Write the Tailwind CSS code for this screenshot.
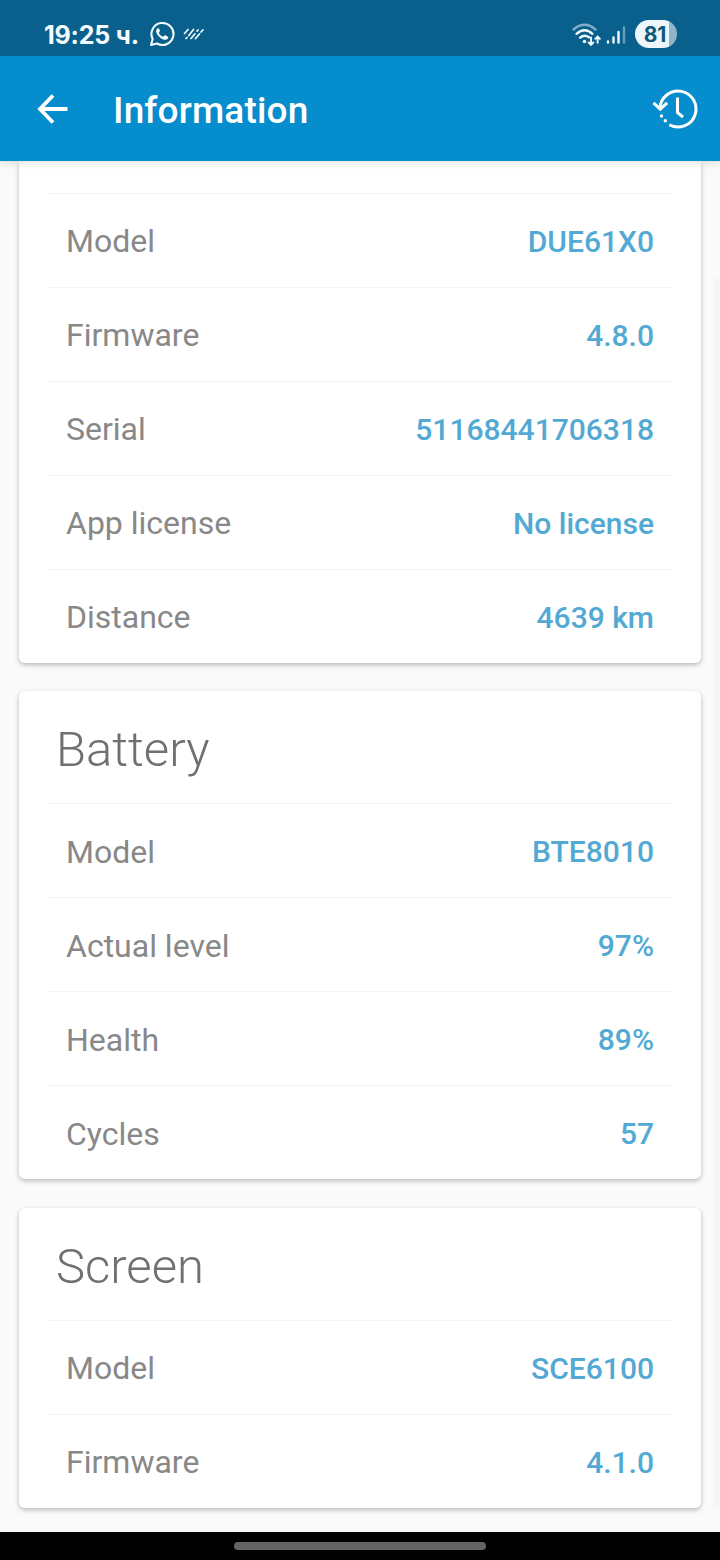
<!DOCTYPE html>
<html lang="en">
<head>
<meta charset="utf-8">
<title>Information</title>
<script src="https://cdn.jsdelivr.net/npm/@tailwindcss/browser@4"></script>
</head>
<body class="w-[720px] h-[1560px] overflow-hidden bg-[#fafafa] font-['Roboto',sans-serif]">
<div class="relative flex h-[1560px] w-[720px] flex-col">
  <header class="relative z-10 shrink-0 shadow-[0_2px_8px_rgba(0,0,0,0.12)]">
    <div class="flex h-14 items-center bg-[#0a608c] pt-3 pl-[44px] pr-[43px] text-[#f4fcff]">
      <span class="w-[96px] whitespace-nowrap pt-0.5 font-['Inter',sans-serif] text-[25px] leading-none font-bold tracking-[-0.2px]">19:25 ч.</span>
      <svg class="ml-[9px] h-[26px] w-[26px] shrink-0" viewBox="0 0 26 26" fill="none">
        <path d="M2 24 L3.7 18 A11 11 0 1 1 8 22.5 Z" stroke="currentColor" stroke-width="2.1" stroke-linejoin="round"/>
        <path d="M9.3 7.3c-.8-.2-2.3 1.200-2.200 3 .1 1.700 1.500 4 3.600 5.900 2.200 1.900 4.600 2.800 6 2.600 1.500-.2 2.700-1.500 2.600-2.500-.1-.6-2.800-2-3.500-2-.6 0-1.100 1.500-1.800 1.500-1.100-.1-4.100-2.900-4.200-4 0-.7 1.100-1.200 1.100-1.900 0-.6-.9-2.500-1.600-2.600Z" fill="currentColor"/>
      </svg>
      <svg class="ml-[8px] h-[14px] w-[22px] shrink-0" viewBox="0 0 22 14" fill="none" stroke="currentColor" stroke-width="1.7" stroke-linecap="round">
        <path d="M1.500 6.500 L5 2.500 M3 11.500 L4 10.500 M5.800 8.500 L10.500 2.500 M8 11.500 L12 6.800 M14 4.200 L15 3 M12.500 11.500 L16.500 7 M18 5 L20 2.800"/>
      </svg>
      <div class="flex-1"></div>
      <svg class="mt-0.5 mr-[2px] h-[24px] w-[30px] shrink-0" viewBox="0 0 30 24" fill="none" stroke="currentColor" stroke-width="2.400" stroke-linecap="round">
        <path d="M2.500 6.500 Q13.500 -3 24.500 6.500" opacity=".5"/>
        <path d="M5.500 10.800 Q13.500 3.600 21.500 10.800 M9 14.600 Q13.500 11.200 18 14.200"/>
        <circle cx="13.500" cy="18.500" r="1.700" fill="currentColor" stroke="none"/>
        <path d="M20 14.500 V21.500 M17.700 19.500 L20 21.800 L22.300 19.500 M26.600 19.700 V13.800 M24.300 15.800 L26.600 13.500 L28.900 15.800" stroke-width="1.900"/>
      </svg>
      <svg class="mt-0.5 ml-[3px] h-5 w-5 shrink-0" viewBox="0 0 20 20" fill="none" stroke="currentColor" stroke-width="2.400" stroke-linecap="round">
        <path d="M2 16.500 V17.500 M7.500 12.500 V17.500 M12.500 7 V17.500"/><path d="M18 2.500 V17.500" opacity=".4"/>
      </svg>
      <div class="ml-[9px] flex h-7 w-[42px] shrink-0 overflow-hidden rounded-full bg-[linear-gradient(to_right,#edf6fa_34px,#8fb5c9_34px)] text-[#0f5878]">
        <span class="w-full pr-0.5 text-center font-['Inter',sans-serif] text-[21px] leading-[29px] font-bold">81</span>
      </div>
    </div>
    <div class="flex h-[105px] items-center bg-[#058dcd] pl-[37px] pr-[22px] text-white">
      <svg class="h-8 w-8 shrink-0" viewBox="0 0 32 32" fill="none" stroke="currentColor" stroke-width="3.800">
        <path d="M30.500 16 H4 M16 2.500 L3 16 L16 29.500"/>
      </svg>
      <h1 class="ml-11 pt-1 text-[37px] leading-none font-medium tracking-[0.15px]">Information</h1>
      <svg class="ml-auto h-11 w-[46px] shrink-0" viewBox="0 0 46 44" fill="none" stroke="currentColor" stroke-width="3">
        <path d="M8 21.500 A18 18 0 1 1 17.300 37.800"/>
        <path d="M1.500 15.800 L8.300 22.200 L15.200 15.800"/>
        <path d="M25.500 10.500 V25.500 L31 30.200"/>
        <circle cx="9.500" cy="29" r="1.700" fill="currentColor" stroke="none"/><circle cx="13.300" cy="33.700" r="1.700" fill="currentColor" stroke="none"/>
      </svg>
    </div>
  </header>
  <main class="flex flex-1 flex-col px-[19px] text-[32px] text-[#888888]">
    <section class="rounded-b-md bg-white px-7 pt-8 shadow-[0_2px_5px_rgba(0,0,0,0.26)]">
      <div class="flex h-[94px] items-center justify-between border-t border-[#f3f3f3] px-[19px]"><span>Model</span><span class="pt-px text-[30px] font-medium text-[#52a9d3]">DUE61X0</span></div>
      <div class="flex h-[94px] items-center justify-between border-t border-[#f3f3f3] px-[19px]"><span>Firmware</span><span class="pt-px text-[30px] font-medium text-[#52a9d3]">4.8.0</span></div>
      <div class="flex h-[94px] items-center justify-between border-t border-[#f3f3f3] px-[19px]"><span>Serial</span><span class="pt-px text-[30px] font-medium text-[#52a9d3]">51168441706318</span></div>
      <div class="flex h-[94px] items-center justify-between border-t border-[#f3f3f3] px-[19px]"><span>App license</span><span class="pt-px text-[30px] font-medium text-[#52a9d3]">No license</span></div>
      <div class="flex h-[94px] items-center justify-between border-t border-[#f3f3f3] px-[19px]"><span>Distance</span><span class="pt-px text-[30px] font-medium text-[#52a9d3]">4639 km</span></div>
    </section>
    <section class="mt-7 rounded-md bg-white px-7 shadow-[0_2px_5px_rgba(0,0,0,0.26)]">
      <h2 class="flex h-28 items-center pt-1.5 pl-[9px] text-[49px] font-light text-[#707070]">Battery</h2>
      <div class="flex h-[94px] items-center justify-between border-t border-[#f3f3f3] px-[19px] pt-0.5"><span>Model</span><span class="text-[30px] font-medium text-[#52a9d3]">BTE8010</span></div>
      <div class="flex h-[94px] items-center justify-between border-t border-[#f3f3f3] px-[19px] pt-0.5"><span>Actual level</span><span class="text-[30px] font-medium text-[#52a9d3]">97%</span></div>
      <div class="flex h-[94px] items-center justify-between border-t border-[#f3f3f3] px-[19px] pt-0.5"><span>Health</span><span class="text-[30px] font-medium text-[#52a9d3]">89%</span></div>
      <div class="flex h-[94px] items-center justify-between border-t border-[#f3f3f3] px-[19px] pt-0.5"><span>Cycles</span><span class="text-[30px] font-medium text-[#52a9d3]">57</span></div>
    </section>
    <section class="mt-[29px] rounded-md bg-white px-7 shadow-[0_2px_5px_rgba(0,0,0,0.26)]">
      <h2 class="flex h-28 items-center pt-1.5 pl-[9px] text-[49px] font-light text-[#707070]">Screen</h2>
      <div class="flex h-[94px] items-center justify-between border-t border-[#f3f3f3] px-[19px]"><span>Model</span><span class="pt-px text-[30px] font-medium text-[#52a9d3]">SCE6100</span></div>
      <div class="flex h-[94px] items-center justify-between border-t border-[#f3f3f3] px-[19px]"><span>Firmware</span><span class="pt-px text-[30px] font-medium text-[#52a9d3]">4.1.0</span></div>
    </section>
  </main>
  <div class="absolute top-[279px] right-0 h-[1230px] w-[7px] bg-[#f5f5f5]"></div>
  <footer class="flex h-7 shrink-0 items-center justify-center bg-black"><div class="h-2 w-[252px] rounded-full bg-[#646464]"></div></footer>
</div>
</body>
</html>
